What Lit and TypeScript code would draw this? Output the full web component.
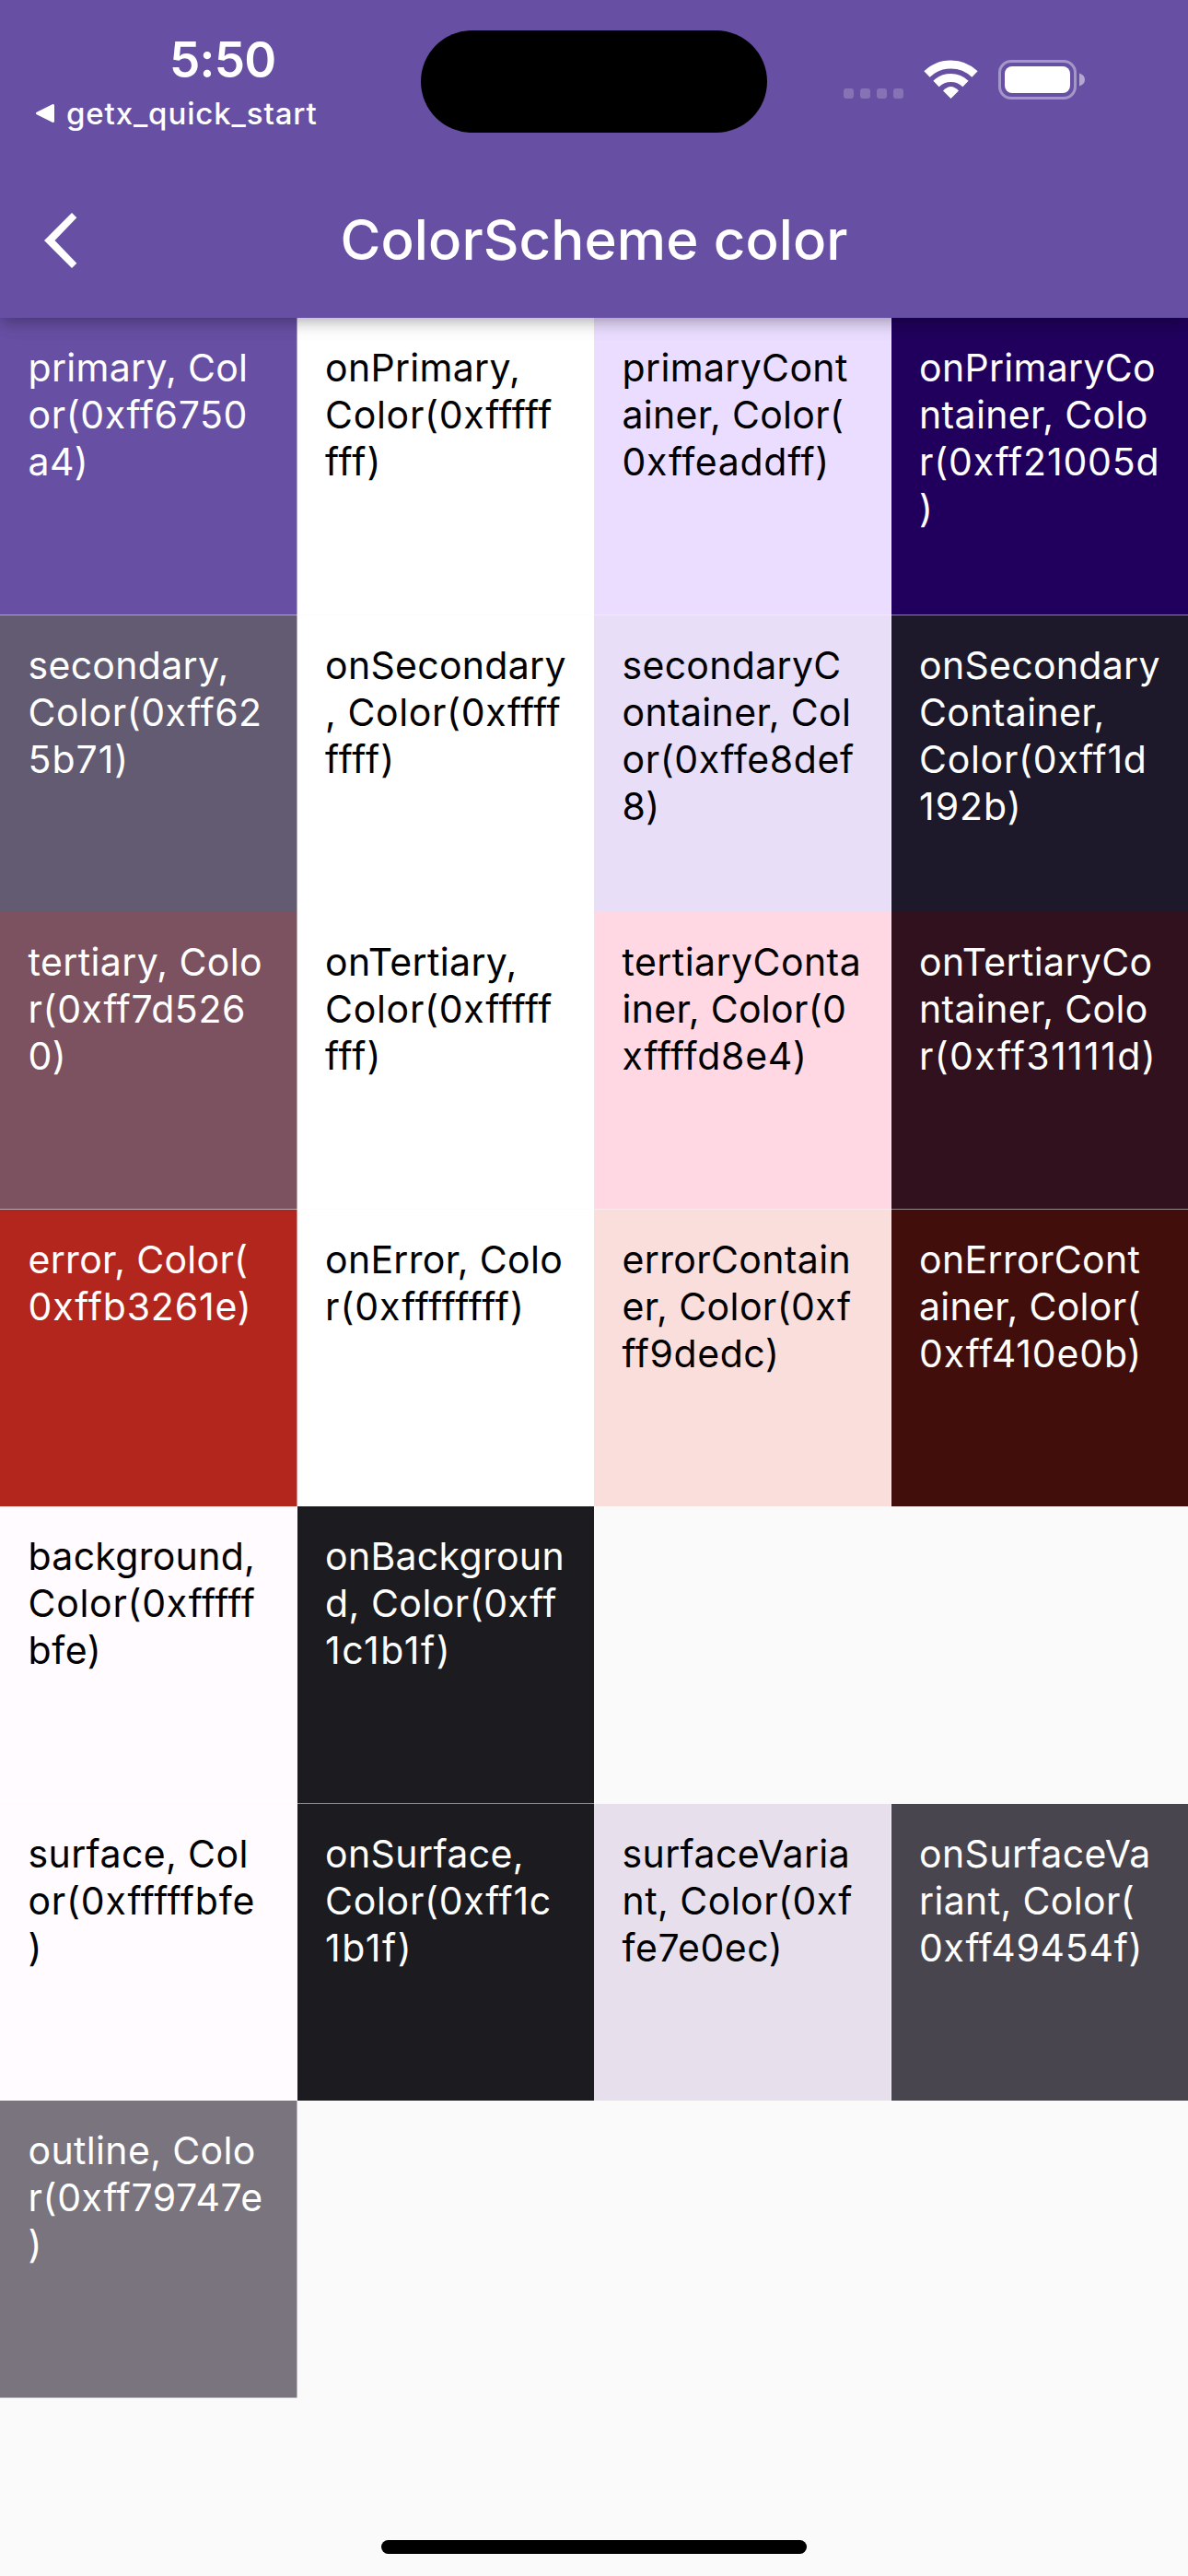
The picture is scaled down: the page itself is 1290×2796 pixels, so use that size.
import { LitElement, html, css, svg } from "lit";
import { customElement } from "lit/decorators.js";

type Swatch = { bg: string; fg: "light" | "dark"; lines: string[] } | null;

const L = (bg: string, ...lines: string[]): Swatch => ({ bg, fg: "light", lines });
const D = (bg: string, ...lines: string[]): Swatch => ({ bg, fg: "dark", lines });

const swatches: Swatch[] = [
  L("#6750a4", "primary, Col", "or(0xff6750", "a4)"),
  D("#ffffff", "onPrimary, ", "Color(0xfffff", "fff)"),
  D("#eaddff", "primaryCont", "ainer, Color(", "0xffeaddff)"),
  L("#21005d", "onPrimaryCo", "ntainer, Colo", "r(0xff21005d", ")"),
  L("#625b71", "secondary, ", "Color(0xff62", "5b71)"),
  D("#ffffff", "onSecondary", ", Color(0xffff", "ffff)"),
  D("#e8def8", "secondaryC", "ontainer, Col", "or(0xffe8def", "8)"),
  L("#1d192b", "onSecondary", "Container, ", "Color(0xff1d", "192b)"),
  L("#7d5260", "tertiary, Colo", "r(0xff7d526", "0)"),
  D("#ffffff", "onTertiary, ", "Color(0xfffff", "fff)"),
  D("#ffd8e4", "tertiaryConta", "iner, Color(0", "xffffd8e4)"),
  L("#31111d", "onTertiaryCo", "ntainer, Colo", "r(0xff31111d)"),
  L("#b3261e", "error, Color(", "0xffb3261e)"),
  D("#ffffff", "onError, Colo", "r(0xffffffff)"),
  D("#f9dedc", "errorContain", "er, Color(0xf", "ff9dedc)"),
  L("#410e0b", "onErrorCont", "ainer, Color(", "0xff410e0b)"),
  D("#fffbfe", "background, ", "Color(0xfffff", "bfe)"),
  L("#1c1b1f", "onBackgroun", "d, Color(0xff", "1c1b1f)"),
  null,
  null,
  D("#fffbfe", "surface, Col", "or(0xfffffbfe", ")"),
  L("#1c1b1f", "onSurface, ", "Color(0xff1c", "1b1f)"),
  D("#e7e0ec", "surfaceVaria", "nt, Color(0xf", "fe7e0ec)"),
  L("#49454f", "onSurfaceVa", "riant, Color(", "0xff49454f)"),
  L("#79747e", "outline, Colo", "r(0xff79747e", ")"),
];

/** Opens up the tracking of lines with many narrow glyphs (f, 1, t) or digits. */
const tracking = (line: string): string => {
  let extra = 0;
  for (const ch of line) {
    extra += ch === "f" ? 1 : ch === "1" ? 2.8 : ch === "t" ? 0.6 : /\d/.test(ch) ? 0.3 : 0;
  }
  return (0.3 + extra / line.length).toFixed(2);
};

/** Hairline seams where a cell edge falls on a half pixel. */
const seams = (i: number): string =>
  [i % 2 ? "" : "seam-right", Math.floor(i / 4) % 2 ? "" : "seam-bottom"].join(" ");

@customElement("app-root")
export class AppRoot extends LitElement {
  static styles = css`
    :host {
      display: flex;
      flex-direction: column;
      position: relative;
      width: 1290px;
      height: 2796px;
      overflow: hidden;
      background: #fafafa;
      font-family: Inter, "Liberation Sans", sans-serif;
      font-feature-settings: "calt" 0;
    }
    .top {
      position: relative;
      z-index: 1;
      box-sizing: border-box;
      height: 345px;
      flex: none;
      background: #6750a4;
      color: #fff;
      box-shadow: 0 6px 12px -3px rgba(0, 0, 0, 0.2), 0 12px 15px 0 rgba(0, 0, 0, 0.06),
        0 3px 24px 0 rgba(0, 0, 0, 0.08);
    }
    .status {
      display: grid;
      grid-template-columns: 457px 376px 1fr;
      height: 177px;
    }
    .time {
      padding: 35px 0 0 184px;
      font-size: 53px;
      line-height: 60px;
      font-weight: 600;
      letter-spacing: -0.8px;
    }
    .return {
      display: flex;
      align-items: center;
      gap: 12px;
      padding-left: 38px;
      margin-top: 8px;
      font-size: 33px;
      line-height: 40px;
      font-weight: 500;
      letter-spacing: 0.88px;
    }
    .island {
      margin-top: 33px;
      height: 111px;
      border-radius: 56px;
      background: #000;
    }
    .bar {
      display: grid;
      grid-template-columns: 168px 1fr 168px;
      align-items: center;
      height: 168px;
    }
    .back {
      margin-left: 48px;
    }
    .title {
      text-align: center;
      font-size: 60px;
      line-height: 72px;
      font-weight: 500;
      letter-spacing: 0.1px;
      margin-top: -2px;
    }
    svg {
      display: block;
    }
    .grid {
      display: grid;
      grid-template-columns: repeat(4, 322.5px);
      grid-auto-rows: 322.5px;
    }
    .cell {
      --right: transparent;
      --bottom: transparent;
      box-sizing: border-box;
      padding: 29px 30px 30px 30.5px;
      font-size: 41px;
      line-height: 51px;
      box-shadow: inset -1px 0 var(--right), inset 0 -1px var(--bottom);
    }
    .line {
      white-space: pre;
    }
    .light {
      color: #fff;
    }
    .dark {
      color: #000;
    }
    .seam-right {
      --right: rgba(250, 250, 250, 0.5);
    }
    .seam-bottom {
      --bottom: rgba(250, 250, 250, 0.5);
    }
    .home {
      position: absolute;
      left: 414px;
      bottom: 24px;
      width: 455px;
      height: 15px;
      width: 462px;
      border-radius: 8px;
      background: #000;
    }
  `;

  private icons() {
    return svg`<svg width="457" height="177" viewBox="833 0 457 177">
      <g fill="#fff" fill-opacity=".2">
        ${[916, 934, 952, 970].map((x) => svg`<rect x=${x} y="96" width="11" height="11" rx="3"/>`)}
      </g>
      <g fill="none" stroke="#fff" stroke-width="9">
        <path d="M1006.5 80.5A37.3 37.3 0 0 1 1058.500 80.5"/>
        <path d="M1016.500 91A23 23 0 0 1 1048.500 91"/>
      </g>
      <path d="M1024 98.500Q1032.500 89.500 1041 98.500L1032.500 107Z" fill="#fff"/>
      <rect x="1085.500" y="66.500" width="82" height="40" rx="12.500" fill="none" stroke="#fff" stroke-opacity=".4" stroke-width="3"/>
      <rect x="1091" y="72" width="71" height="29" rx="8" fill="#fff"/>
      <path d="M1172 79.500Q1178 81.500 1178 86.500Q1178 91.500 1172 93.500Z" fill="#fff" fill-opacity=".5"/>
    </svg>`;
  }

  render() {
    return html`
      <header class="top">
        <div class="status">
          <div>
            <div class="time">5:50</div>
            <div class="return">
              <svg width="22" height="22" viewBox="0 0 22 22">
                <path d="M2.500 11L19.500 2.500V19.500Z" fill="#fff" stroke="#fff" stroke-width="3" stroke-linejoin="round" />
              </svg>
              <span>getx_quick_start</span>
            </div>
          </div>
          <div class="island"></div>
          ${this.icons()}
        </div>
        <div class="bar">
          <svg class="back" width="36" height="60" viewBox="0 0 36 60">
            <path d="M30 0L35.300 5.300L11.500 30L35.300 54.700L30 60L0 30Z" fill="#fff" />
          </svg>
          <div class="title">ColorScheme color</div>
        </div>
      </header>
      <main class="grid">
        ${swatches.map((s, i) =>
          s
            ? html`<div class="cell ${s.fg} ${seams(i)}" style="background:${s.bg}">
                ${s.lines.map((l) => html`<div class="line" style="letter-spacing:${tracking(l)}px">${l}</div>`)}
              </div>`
            : html`<div></div>`,
        )}
      </main>
      <div class="home"></div>
    `;
  }
}
